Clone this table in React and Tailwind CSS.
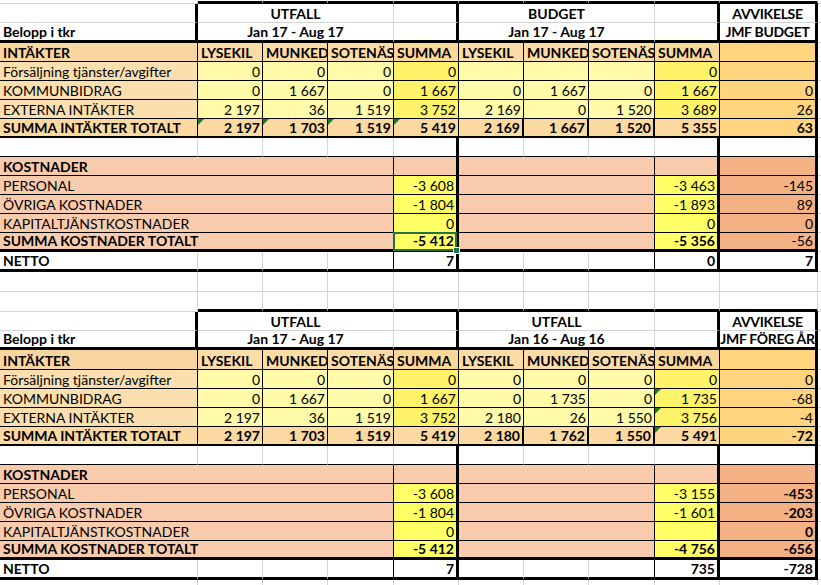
import React from "react";

// excel-ish fills
const F = {
  hdr: "bg-[#f9d5a0]",
  colh: "bg-[#fbdca7]",
  colhSum: "bg-[#fbd898]",
  lbl: "bg-[#fcdfae]",
  val: "bg-[#fffba8]",
  sum: "bg-[#fff36a]",
  tot: "bg-[#fbd9a0]",
  avv: "bg-[#ffd47f]",
  kost: "bg-[#f8cbad]",
  kostSum: "bg-[#ffff66]",
  kostAvv: "bg-[#f4b183]",
};

const GRID = "border-[#d4d4d4]";
const B = "border-r border-b border-black";
const nb = (s) => s.replace(/ /g, "\u00a0");

function Cell({ children, span, className = "", right, center, bold, tri, sel }) {
  const align = right ? "text-right pr-[2px] overflow-hidden" : center ? "text-center" : "pl-[3px] overflow-hidden";
  return (
    <td colSpan={span} className={`p-0 align-bottom ${tri || sel ? "relative" : ""} ${className}`}>
      <div className={`whitespace-nowrap leading-[16px] ${align} ${bold ? "font-bold" : ""}`}>
        {children}
      </div>
      {tri && (
        <span className="absolute left-0 top-0 border-t-[6px] border-r-[6px] border-t-[#1f7a2a] border-r-transparent" />
      )}
      {sel && (
        <>
          <span className="absolute -left-[1px] -top-[1px] right-[-1px] bottom-[-2px] border-2 border-[#217346]" />
          <span className="absolute z-10 -right-[4px] -bottom-[5px] w-[7px] h-[7px] bg-[#217346] border border-white" />
        </>
      )}
    </td>
  );
}

function Filler({ className = "" }) {
  return <Cell className={`border-b ${GRID} ${className}`} />;
}

function GapRow({ h, thick }) {
  const bottom = thick ? "border-b-[3px] border-b-black" : "border-b";
  return (
    <tr className={h}>
      <Cell className={`border-r border-b ${GRID}`} />
      {[1, 2, 3, 4, 5, 6, 7, 8, 9].map((i) => (
        <Cell key={i} className={`border-r ${GRID} ${bottom}`} />
      ))}
      <Filler />
    </tr>
  );
}

function HeadRow({ h, first, left, mid, avv }) {
  const bottom = first ? `border-b ${GRID}` : "border-b-[3px] border-b-black";
  const bottomGrid = first ? "border-b border-b-[#d4d4d4]" : "border-b-[3px] border-b-black";
  return (
    <tr className={h}>
      <Cell bold className={`border-r-[3px] border-r-black ${bottomGrid}`}>
        {left}
      </Cell>
      <Cell span={3} center bold className={`border-r ${GRID} ${bottom}`}>
        {mid[0]}
      </Cell>
      <Cell className={`border-r-[3px] border-r-black ${bottomGrid}`} />
      <Cell span={3} center bold className={`border-r ${GRID} ${bottom}`}>
        {mid[1]}
      </Cell>
      <Cell className={`border-r-[3px] border-r-black ${bottomGrid}`} />
      <Cell center bold className={`border-r-[3px] border-r-black tracking-[-0.3px] ${bottomGrid}`}>
        {avv}
      </Cell>
      <Filler />
    </tr>
  );
}

const cols = ["LYSEKIL", "MUNKEDAL", "SOTENÄS", "SUMMA", "LYSEKIL", "MUNKEDAL", "SOTENÄS", "SUMMA"];

function Block({ d }) {
  return (
    <>
      <HeadRow h="h-[19px]" first mid={[d.t1, d.t2]} avv="AVVIKELSE" />
      <HeadRow h={d.h2} left="Belopp i tkr" mid={[d.d1, d.d2]} avv={d.avv} />

      <tr className={d.h3}>
        <Cell bold className={`${F.hdr} ${B}`}>INTÄKTER</Cell>
        {cols.map((c, i) => (
          <Cell key={i} bold className={`${i % 4 === 3 ? F.colhSum : F.colh} ${B}`}>
            {c}
          </Cell>
        ))}
        <Cell className={`${F.avv} border-r-[3px] border-b border-black`} />
        <Filler />
      </tr>

      {d.inc.map((r, ri) => (
        <tr key={ri} className="h-[19px]">
          <Cell className={`${F.lbl} ${B}`}>{r.l}</Cell>
          {r.v.map((v, i) => (
            <Cell key={i} right tri={d.tri.includes(`${ri}-${i}`)} className={`${i % 4 === 3 ? F.sum : F.val} ${B}`}>
              {nb(v)}
            </Cell>
          ))}
          <Cell right className={`${F.avv} border-r-[3px] border-b border-black`}>{r.a}</Cell>
          <Filler />
        </tr>
      ))}

      <tr className="h-[19px]">
        <Cell bold className={`${F.tot} border-r border-b-2 border-black`}>SUMMA INTÄKTER TOTALT</Cell>
        {d.tot.v.map((v, i) => (
          <Cell
            key={i}
            right
            bold
            tri={d.tri.includes(`t-${i}`)}
            className={`${F.tot} ${i >= 4 && i <= 6 ? "border-r-2" : "border-r"} border-b-2 border-black`}
          >
            {nb(v)}
          </Cell>
        ))}
        <Cell right bold className={`${F.avv} border-r-[3px] border-b-2 border-black`}>{d.tot.a}</Cell>
        <Filler />
      </tr>

      <tr className="h-[19px]">
        <Cell className={`border-r ${GRID} border-b border-b-black`} />
        <Cell className={`border-r ${GRID} border-b border-b-black`} />
        <Cell className={`border-r ${GRID} border-b border-b-black`} />
        <Cell className={`border-r ${GRID} border-b border-b-black`} />
        <Cell className="border-r-[3px] border-b border-black" />
        <Cell className={`border-r ${GRID} border-b border-b-black`} />
        <Cell className={`border-r ${GRID} border-b border-b-black`} />
        <Cell className={`border-r ${GRID} border-b border-b-black`} />
        <Cell className="border-r-[3px] border-b border-black" />
        <Cell className="border-r-[3px] border-b border-black" />
        <Filler />
      </tr>

      {[{ l: "KOSTNADER", head: true }, ...d.cost, { ...d.costTot, total: true }].map((r, ri) => {
        const bb = r.total ? "border-b-[3px]" : "border-b";
        const bold = r.head || r.total;
        return (
          <tr key={ri} className="h-[19px]">
            <Cell span={4} bold={bold} className={`${F.kost} border-r ${bb} border-black`}>
              {r.l}
            </Cell>
            <Cell right bold={bold} sel={r.total && d.sel} className={`${r.head ? F.kost : F.kostSum} border-r-[3px] ${bb} border-black`}>
              {r.u && nb(r.u)}
            </Cell>
            <Cell span={3} className={`${F.kost} border-r ${bb} border-black`} />
            <Cell right bold={bold} className={`${r.head ? F.kost : F.kostSum} border-r-[3px] ${bb} border-black`}>
              {r.b && nb(r.b)}
            </Cell>
            <Cell right bold={r.total ? d.avvTotBold : d.avvBold} className={`${F.kostAvv} border-r-[3px] ${bb} border-black`}>
              {r.a}
            </Cell>
            <Filler />
          </tr>
        );
      })}

      <tr className="h-[20px]">
        <Cell bold className={`border-r ${GRID} border-b-[3px] border-b-black`}>NETTO</Cell>
        <Cell className={`border-r ${GRID} border-b-[3px] border-b-black`} />
        <Cell className={`border-r ${GRID} border-b-[3px] border-b-black`} />
        <Cell className="border-r border-b-[3px] border-black" />
        <Cell right bold className="border-r-[3px] border-b-[3px] border-black">{d.net.u}</Cell>
        <Cell className={`border-r ${GRID} border-b-[3px] border-b-black`} />
        <Cell className={`border-r ${GRID} border-b-[3px] border-b-black`} />
        <Cell className="border-r border-b-[3px] border-black" />
        <Cell right bold className="border-r-[3px] border-b-[3px] border-black">{d.net.b}</Cell>
        <Cell right bold className="border-r-[3px] border-b-[3px] border-black">{d.net.a}</Cell>
        <Filler />
      </tr>
    </>
  );
}

const BLOCKS = [
  {
    t1: "UTFALL",
    t2: "BUDGET",
    d1: "Jan 17 - Aug 17",
    d2: "Jan 17 - Aug 17",
    avv: "JMF BUDGET",
    h2: "h-[20px]",
    h3: "h-[19px]",
    inc: [
      { l: "Försäljning tjänster/avgifter", v: ["0", "0", "0", "0", "", "", "", "0"], a: "" },
      { l: "KOMMUNBIDRAG", v: ["0", "1 667", "0", "1 667", "0", "1 667", "0", "1 667"], a: "0" },
      { l: "EXTERNA INTÄKTER", v: ["2 197", "36", "1 519", "3 752", "2 169", "0", "1 520", "3 689"], a: "26" },
    ],
    tot: { v: ["2 197", "1 703", "1 519", "5 419", "2 169", "1 667", "1 520", "5 355"], a: "63" },
    cost: [
      { l: "PERSONAL", u: "-3 608", b: "-3 463", a: "-145" },
      { l: "ÖVRIGA KOSTNADER", u: "-1 804", b: "-1 893", a: "89" },
      { l: "KAPITALTJÄNSTKOSTNADER", u: "0", b: "0", a: "0" },
    ],
    costTot: { l: "SUMMA KOSTNADER TOTALT", u: "-5 412", b: "-5 356", a: "-56" },
    net: { u: "7", b: "0", a: "7" },
    tri: ["t-0", "t-1", "t-2", "t-3"],
    sel: true,
    avvBold: false,
    avvTotBold: false,
  },
  {
    t1: "UTFALL",
    t2: "UTFALL",
    d1: "Jan 17 - Aug 17",
    d2: "Jan 16 - Aug 16",
    avv: "JMF FÖREG ÅR",
    h2: "h-[19px]",
    h3: "h-[20px]",
    inc: [
      { l: "Försäljning tjänster/avgifter", v: ["0", "0", "0", "0", "0", "0", "0", "0"], a: "0" },
      { l: "KOMMUNBIDRAG", v: ["0", "1 667", "0", "1 667", "0", "1 735", "0", "1 735"], a: "-68" },
      { l: "EXTERNA INTÄKTER", v: ["2 197", "36", "1 519", "3 752", "2 180", "26", "1 550", "3 756"], a: "-4" },
    ],
    tot: { v: ["2 197", "1 703", "1 519", "5 419", "2 180", "1 762", "1 550", "5 491"], a: "-72" },
    cost: [
      { l: "PERSONAL", u: "-3 608", b: "-3 155", a: "-453" },
      { l: "ÖVRIGA KOSTNADER", u: "-1 804", b: "-1 601", a: "-203" },
      { l: "KAPITALTJÄNSTKOSTNADER", u: "0", b: "", a: "0" },
    ],
    costTot: { l: "SUMMA KOSTNADER TOTALT", u: "-5 412", b: "-4 756", a: "-656" },
    net: { u: "7", b: "735", a: "-728" },
    tri: ["1-7", "2-7", "t-7"],
    sel: false,
    avvBold: true,
    avvTotBold: true,
  },
];

export default function App() {
  return (
    <div className="w-[821px] h-[585px] overflow-hidden bg-white text-black font-['Lato',sans-serif] text-[14px]">
      <table className="table-fixed border-separate border-spacing-0 w-[821px]">
        <colgroup>
          <col className="w-[198px]" />
          <col className="w-[65px]" />
          <col className="w-[65px]" />
          <col className="w-[66px]" />
          <col className="w-[65px]" />
          <col className="w-[65px]" />
          <col className="w-[65px]" />
          <col className="w-[66px]" />
          <col className="w-[65px]" />
          <col className="w-[98px]" />
          <col className="w-[3px]" />
        </colgroup>
        <tbody>
          <GapRow h="h-[4px]" thick />
          <Block d={BLOCKS[0]} />
          <GapRow h="h-[20px]" />
          <GapRow h="h-[20px]" thick />
          <Block d={BLOCKS[1]} />
          <GapRow h="h-[20px]" />
        </tbody>
      </table>
    </div>
  );
}
